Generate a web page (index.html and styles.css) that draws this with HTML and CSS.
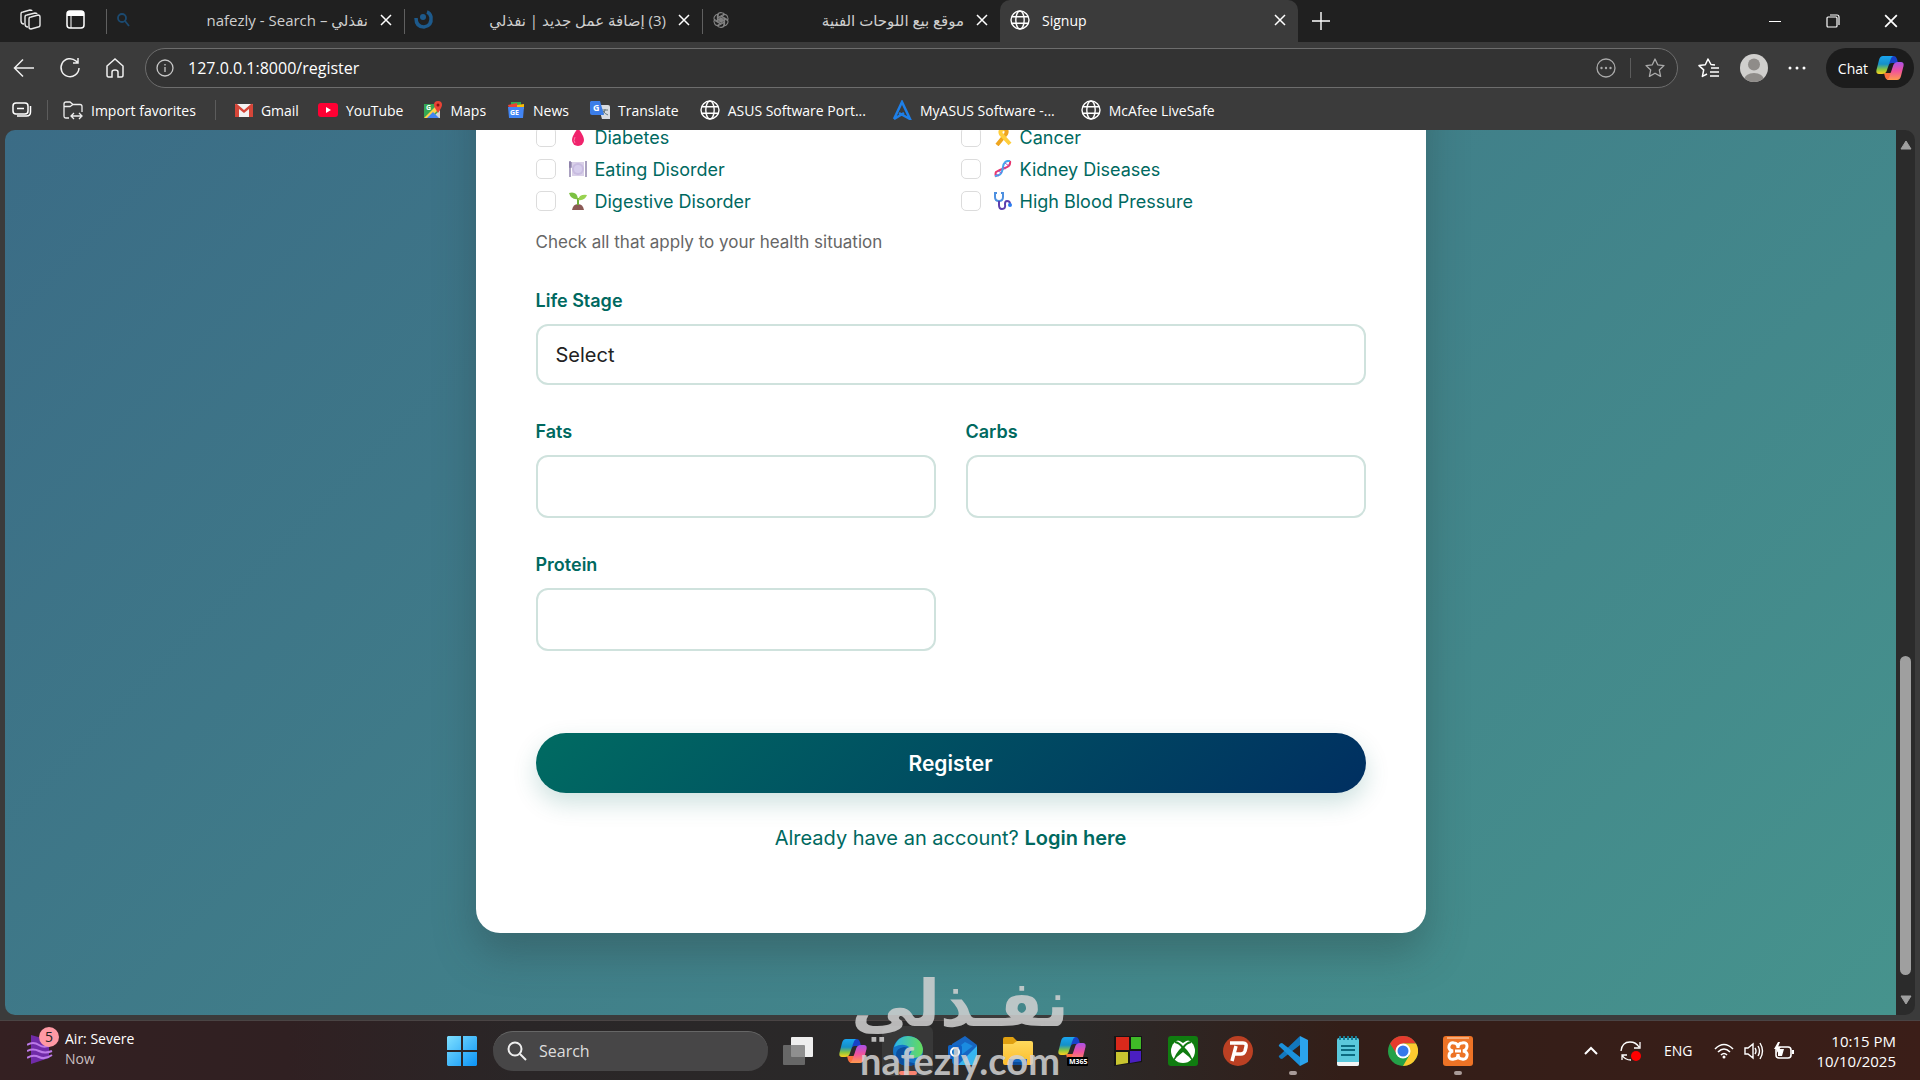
FILE: index.html
```html
<!DOCTYPE html>
<html lang="en">

<head>
    <meta charset="UTF-8">
    <title>Signup</title>
    <link rel="stylesheet" href="styles.css">
</head>

<body>
    <!-- shared icons -->
    <svg class="sprite" width="0" height="0" aria-hidden="true">
        <defs>
            <linearGradient id="copA" x1="0" y1="0" x2="0" y2="1">
                <stop offset="0" stop-color="#1aa5f0"/><stop offset=".45" stop-color="#1590c8"/><stop offset=".75" stop-color="#8cc63f"/><stop offset="1" stop-color="#ffd21e"/>
            </linearGradient>
            <linearGradient id="copB" x1="0" y1="0" x2="0" y2="1">
                <stop offset="0" stop-color="#a951e8"/><stop offset=".5" stop-color="#f0529c"/><stop offset="1" stop-color="#ff9a4d"/>
            </linearGradient>
            <linearGradient id="winG" x1="0" y1="0" x2="1" y2="1">
                <stop offset="0" stop-color="#7fe0ff"/><stop offset="1" stop-color="#0b93f6"/>
            </linearGradient>
            <linearGradient id="edgeA" x1="0" y1="0" x2="1" y2="0">
                <stop offset="0" stop-color="#2bb5e8"/><stop offset="1" stop-color="#66dc5a"/>
            </linearGradient>
            <linearGradient id="foldG" x1="0" y1="0" x2="0" y2="1">
                <stop offset="0" stop-color="#ffd95c"/><stop offset="1" stop-color="#fbbc2c"/>
            </linearGradient>
        </defs>
        <symbol id="globe" viewBox="0 0 20 20">
            <g fill="none" stroke="currentColor" stroke-width="1.4"><circle cx="10" cy="10" r="9"/><ellipse cx="10" cy="10" rx="4.2" ry="9"/><path d="M2 6.7h16M2 13.3h16"/></g>
        </symbol>
        <symbol id="close" viewBox="0 0 12 12">
            <path d="M1 1l10 10M11 1L1 11" fill="none" stroke="currentColor" stroke-width="1.5"/>
        </symbol>
        <symbol id="copilot" viewBox="0 0 28 26">
            <path d="M14 1h4q2 0 3 3l1 4h-6q-3 0-4 4z" fill="#1742c8"/>
            <path d="M8 18h6q2 0 3-4l2 8q-1 3-4 3h-3q-2 0-3-3z" fill="#f9703e"/>
            <path d="M7 1h10q-2 1-3 5l-3 9q-1 4-5 4H3q-4 0-2-6l2-8q1-4 4-4z" fill="url(#copA)"/>
            <path d="M21 25H11q2-1 3-5l3-9q1-4 5-4h3q4 0 2 6l-2 8q-1 4-4 4z" fill="url(#copB)"/>
        </symbol>
    </svg>

    <div class="browser">
        <!-- Tab strip -->
        <div class="tab-strip">
            <div class="strip-tools">
                <button class="icon-btn" aria-label="Workspaces"><svg width="22" height="22" viewBox="0 0 22 22" fill="none" stroke="#e8e8e8" stroke-width="1.4"><path d="M11 8l7-2q2 0 2 2v8q0 2-2 2l-7 2q-2 0-2-2v-8q0-2 2-2z"/><path d="M8 18q-3 0-3-3V8q0-2 2-2l8-2q2 0 2 1M4 15q-3 0-3-3V5q0-2 2-2l7-2q2 0 2 1"/></svg></button>
                <button class="icon-btn" aria-label="Tab actions"><svg width="20" height="20" viewBox="0 0 20 20"><rect x="1" y="1" width="17" height="17" rx="3" fill="none" stroke="#fff" stroke-width="1.5"/><path d="M1 3q0-2 2-2h13q2 0 2 2v3H1z" fill="#fff"/><path d="M5 6v12" stroke="#fff"/></svg></button>
            </div>
            <div class="tab">
                <svg width="14" height="14" viewBox="0 0 14 14" fill="none" stroke="#1c4a70" stroke-width="1.8"><circle cx="6" cy="5" r="4"/><path d="M9 8l4 5"/></svg>
                <span class="tab-title right" dir="ltr">nafezly - Search – نفذلي</span>
                <button class="icon-btn" aria-label="Close tab"><svg width="12" height="12"><use href="#close"/></svg></button>
            </div>
            <div class="tab">
                <svg width="20" height="20" viewBox="0 0 20 20"><path d="M2 8q0 9 8 9 8-1 7-10-1-4-4-5" fill="none" stroke="#1d5a8c" stroke-width="3.5"/><circle cx="9" cy="7" r="3" fill="#1d5a8c"/></svg>
                <span class="tab-title right" dir="rtl">(3) إضافة عمل جديد | نفذلي</span>
                <button class="icon-btn" aria-label="Close tab"><svg width="12" height="12"><use href="#close"/></svg></button>
            </div>
            <div class="tab">
                <svg width="18" height="18" viewBox="0 0 20 20" fill="none" stroke="#858585" stroke-width="1.2"><g id="petal"><path d="M6 12V5q1-4 5-3 2 0 3 2L9 7v6"/></g><use href="#petal" transform="rotate(60 10 10)"/><use href="#petal" transform="rotate(120 10 10)"/><use href="#petal" transform="rotate(180 10 10)"/><use href="#petal" transform="rotate(240 10 10)"/><use href="#petal" transform="rotate(300 10 10)"/></svg>
                <span class="tab-title right" dir="rtl">موقع بيع اللوحات الفنية</span>
                <button class="icon-btn" aria-label="Close tab"><svg width="12" height="12"><use href="#close"/></svg></button>
            </div>
            <div class="tab active">
                <svg width="20" height="20"><use href="#globe"/></svg>
                <span class="tab-title">Signup</span>
                <button class="icon-btn" aria-label="Close tab"><svg width="12" height="12"><use href="#close"/></svg></button>
            </div>
            <button class="icon-btn new-tab" aria-label="New tab"><svg width="18" height="18" viewBox="0 0 18 18" stroke="#fff" stroke-width="1.4"><path d="M9 0v18M0 9h18"/></svg></button>
            <div class="window-controls">
                <button class="icon-btn" aria-label="Minimize"><svg width="14" height="14" viewBox="0 0 14 14" stroke="#fff"><path d="M1 7.500h12"/></svg></button>
                <button class="icon-btn" aria-label="Restore"><svg width="14" height="14" viewBox="0 0 14 14" fill="none" stroke="#fff" stroke-width="1.200"><rect x="1" y="3" width="10" height="10" rx="1"/><path d="M4 1h7q2 0 2 2v8"/></svg></button>
                <button class="icon-btn" aria-label="Close"><svg width="14" height="14"><use href="#close"/></svg></button>
            </div>
        </div>

        <!-- Toolbar -->
        <div class="toolbar">
            <div class="nav-buttons">
                <button class="icon-btn" aria-label="Back"><svg width="22" height="20" viewBox="0 0 22 20" fill="none" stroke="#f0f0f0" stroke-width="1.500"><path d="M21 10H2M10 1.500L1.500 10l8.500 8.500"/></svg></button>
                <button class="icon-btn" aria-label="Refresh"><svg width="22" height="22" viewBox="0 0 22 22" fill="none" stroke="#f0f0f0" stroke-width="1.500"><path d="M20 11a9 9 0 1 1-3-7l2 2M19 1v5h-5"/></svg></button>
                <button class="icon-btn" aria-label="Home"><svg width="20" height="20" viewBox="0 0 20 20" fill="none" stroke="#f0f0f0" stroke-width="1.500"><path d="M2 8l8-7 8 7v9q0 2-1.500 2H13v-5q0-2-3-2t-3 2v5H3.500Q2 19 2 17z"/></svg></button>
            </div>
            <div class="address-bar">
                <svg width="18" height="18" viewBox="0 0 18 18" fill="none" stroke="#c8c8c8" stroke-width="1.300"><circle cx="9" cy="9" r="8"/><path d="M9 8v5M9 5v1.500"/></svg>
                <input class="url" type="text" aria-label="Address" value="127.0.0.1:8000/register">
                <button class="icon-btn" aria-label="Page options"><svg width="20" height="20" viewBox="0 0 20 20" fill="#aaa"><circle cx="10" cy="10" r="9" fill="none" stroke="#aaa" stroke-width="1.300"/><circle cx="5.500" cy="10" r="1.200"/><circle cx="10" cy="10" r="1.200"/><circle cx="14.500" cy="10" r="1.200"/></svg></button>
                <span class="divider"></span>
                <button class="icon-btn" aria-label="Add to favorites"><svg width="20" height="20" viewBox="0 0 20 20" fill="none" stroke="#aaa" stroke-width="1.300" stroke-linejoin="round"><path d="M10 1l2.700 5.800 6.300.8-4.700 4.300 1.300 6.500-5.600-3.200-5.600 3.200 1.300-6.500L1 7.600l6.300-.8z"/></svg></button>
            </div>
            <div class="toolbar-end">
                <button class="icon-btn" aria-label="Favorites"><svg width="22" height="20" viewBox="0 0 22 20" fill="none" stroke="#fff" stroke-width="1.500" stroke-linejoin="round"><path d="M17 7l-4-.5L10 1 7.300 6.800 1 7.600l4.700 4.300-1.300 6.500L9 16M13 10h8M12 14h9M12 18h9"/></svg></button>
                <button class="icon-btn" aria-label="Profile"><svg width="28" height="28" viewBox="0 0 28 28"><clipPath id="av"><circle cx="14" cy="14" r="14"/></clipPath><g clip-path="url(#av)"><path d="M0 0h28v28H0z" fill="#d0cfcd"/><circle cx="14" cy="10.500" r="6" fill="#8f8c89"/><ellipse cx="14" cy="26" rx="10" ry="7" fill="#8f8c89"/></g></svg></button>
                <button class="icon-btn" aria-label="Settings"><svg width="18" height="6" viewBox="0 0 18 6" fill="#fff"><circle cx="2" cy="3" r="1.500"/><circle cx="9" cy="3" r="1.500"/><circle cx="16" cy="3" r="1.500"/></svg></button>
                <button class="chat-btn">Chat <svg width="28" height="26"><use href="#copilot"/></svg></button>
            </div>
        </div>

        <!-- Favorites bar -->
        <nav class="favorites">
            <button class="icon-btn" aria-label="Saved"><svg width="20" height="16" viewBox="0 0 20 16" fill="none" stroke="#fff" stroke-width="1.500"><rect x="1" y="1" width="15" height="11" rx="3"/><path d="M5 6.500h7M18.500 4v6q0 4-4 4H5"/></svg></button>
            <span class="divider"></span>
            <a href="#" class="fav wide"><svg width="20" height="20" viewBox="0 0 20 20" fill="none" stroke="#eee" stroke-width="1.300"><path d="M6 18H3q-2 0-2-2V4q0-2 2-2h4l3 2.500h7q2 0 2 2V12M1 6.500h6l3-2M8 16h10M11 13l-3 3 3 3M16 13l3 3-3 3"/></svg>Import favorites</a>
            <span class="divider"></span>
            <a href="#" class="fav first"><svg width="18" height="14" viewBox="0 0 18 14"><path d="M0 1h18v13H0z" fill="#f2f2f2"/><path d="M0 2q0-2 2-1l7 6 7-6q2-1 2 1v12h-4V6l-5 4-5-4v8H0z" fill="#d54639"/></svg>Gmail</a>
            <a href="#" class="fav"><svg width="20" height="14" viewBox="0 0 20 14"><rect width="20" height="14" rx="3" fill="#f03"/><path d="M8 4l5 3-5 3z" fill="#fff"/></svg>YouTube</a>
            <a href="#" class="fav"><svg width="18" height="18" viewBox="0 0 18 18"><path d="M0 3h16v14H0z" fill="#35a853"/><path d="M16 9v8H8z" fill="#d5d5d5"/><path d="M0 17L13 4l3 3L6 17z" fill="#ffd04b"/><path d="M3 17l6-6 6 6z" fill="#4285f4"/><text x="2" y="9" class="tiny-g">G</text><path d="M14 0a4 4 0 0 1 4 4q0 2-4 8-4-6-4-8a4 4 0 0 1 4-4z" fill="#ea4335"/><circle cx="14" cy="4" r="1.500" fill="#811"/></svg>Maps</a>
            <a href="#" class="fav"><svg width="18" height="16" viewBox="0 0 18 16"><path d="M4 0h10v6H4z" fill="#34a853"/><path d="M1 3l9-2 1 5H2z" fill="#ea4335"/><path d="M10 3l7-1v5h-7z" fill="#fbbc04"/><path d="M1 5h16l-1 11H2z" fill="#4285f4"/><text x="3" y="13" class="tiny-g">GE</text></svg>News</a>
            <a href="#" class="fav"><svg width="20" height="18" viewBox="0 0 20 18"><path d="M8 4h10q2 0 2 2v12h-8z" fill="#d8dbe0"/><path d="M12 9h6M15 8v1q-1 4-3 5M13 10q2 3 5 4" stroke="#677" fill="none"/><path d="M1 0h9l4 14H2q-2 0-2-2V1z" fill="#3b7de8"/><text x="3" y="10" class="tiny-g big">G</text></svg>Translate</a>
            <a href="#" class="fav long"><svg width="20" height="20"><use href="#globe"/></svg>ASUS Software Port...</a>
            <a href="#" class="fav long"><svg width="20" height="20" viewBox="0 0 20 20" fill="none" stroke="#1e7fe8" stroke-width="2.500"><path d="M2 19L10 2l8 17-11-6M2 19l10-6"/></svg>MyASUS Software -...</a>
            <a href="#" class="fav"><svg width="20" height="20"><use href="#globe"/></svg>McAfee LiveSafe</a>
        </nav>

        <!-- Page -->
        <div class="view">
            <main class="page">
                <form class="card">
                    <div class="conditions">
                        <label class="check"><input type="checkbox"><svg width="18" height="18" viewBox="0 0 18 18"><path d="M9 0q6 8 6 12a6 6 0 0 1-12 0q0-4 6-12z" fill="#f0236c"/><path d="M6 9q-2 4 0 6" stroke="#ff79a8" fill="none"/></svg>Diabetes</label>
                        <label class="check"><input type="checkbox"><svg width="18" height="18" viewBox="0 0 18 18" fill="none" stroke-width="4"><path d="M3 17L12 6q2-4-2-5" stroke="#eea51f"/><path d="M16 16L7 6q-2-4 3-5" stroke="#ffce3c"/></svg>Cancer</label>
                        <label class="check"><input type="checkbox"><svg width="18" height="18" viewBox="0 0 18 18"><path d="M3 2h12v14H3z" fill="#d9d0e8"/><circle cx="9" cy="9" r="6" fill="#c8bce0"/><circle cx="9" cy="9" r="4" fill="#d6cdec"/><path d="M1 1v16M17 1v16M0 2v5h2V2" stroke="#8e82ab" stroke-width="1.500" fill="none"/></svg>Eating Disorder</label>
                        <label class="check"><input type="checkbox"><svg width="18" height="18" viewBox="0 0 18 18" fill="none" stroke-width="2"><path d="M16 1q1 5-5 7t-9 4q-1 2 0 5" stroke="#e8376f"/><path d="M16 1q-6-1-7 6t-4 8q-2 1-4 1" stroke="#48a7ef"/><path d="M11 3l4 3M9 7l3 2M4 11l4 2M2 14l3 2" stroke="#9b59c9" stroke-width="1"/></svg>Kidney Diseases</label>
                        <label class="check"><input type="checkbox"><svg width="18" height="18" viewBox="0 0 18 18"><path d="M3 18q1-6 6-6t6 6z" fill="#8b5a55"/><path d="M9 13V6" stroke="#6fae37" stroke-width="2"/><path d="M9 7Q2 8 0 1q8-2 9 6z" fill="#7cc142"/><path d="M9 8q1-6 9-5-2 6-9 5z" fill="#98d250"/></svg>Digestive Disorder</label>
                        <label class="check"><input type="checkbox"><svg width="18" height="18" viewBox="0 0 18 18" fill="none" stroke-width="2"><path d="M3 1H1v4q0 4 4 4t4-4V1H7" stroke="#4c8fe0"/><path d="M5 9v4q0 4 3 4 4 0 3-5 0-3 2-3 3 0 3 3" stroke="#5b3fae"/><circle cx="16" cy="13" r="2" fill="#2b7cf0"/></svg>High Blood Pressure</label>
                    </div>
                    <p class="hint">Check all that apply to your health situation</p>

                    <div class="fields">
                        <div class="field full">
                            <label for="stage">Life Stage</label>
                            <select id="stage" name="stage">
                                <option>Select</option>
                            </select>
                        </div>
                        <div class="field">
                            <label for="fats">Fats</label>
                            <input type="text" id="fats" name="fats">
                        </div>
                        <div class="field">
                            <label for="carbs">Carbs</label>
                            <input type="text" id="carbs" name="carbs">
                        </div>
                        <div class="field">
                            <label for="protein">Protein</label>
                            <input type="text" id="protein" name="protein">
                        </div>
                    </div>

                    <button type="button" class="register">Register</button>
                    <p class="login">Already have an account? <a href="#">Login here</a></p>
                </form>
            </main>
            <div class="scrollbar">
                <svg width="12" height="10" viewBox="0 0 12 10"><path d="M6 1l5 8H1z" fill="#9f9f9f" stroke="#9f9f9f" stroke-linejoin="round"/></svg>
                <div class="track"><div class="thumb"></div></div>
                <svg width="12" height="10" viewBox="0 0 12 10"><path d="M6 9l5-8H1z" fill="#9f9f9f" stroke="#9f9f9f" stroke-linejoin="round"/></svg>
            </div>
        </div>
    </div>

    <!-- Taskbar -->
    <footer class="taskbar">
        <button class="weather">
            <span class="weather-icon">
                <svg width="26" height="30" viewBox="0 0 26 30"><path d="M4 1l18 5v18L4 30z" fill="#702ba8"/><path d="M0 11q6-4 12 0t13-1M0 17q6-3 12 0t13 0M0 24q6-4 12-1t13-2" fill="none" stroke="#bb79e8" stroke-width="2"/></svg>
                <span class="badge">5</span>
            </span>
            <span class="weather-text">Air: Severe<br><span class="muted">Now</span></span>
        </button>

        <div class="apps">
            <button class="app" aria-label="Start"><svg width="30" height="30" viewBox="0 0 30 30"><path d="M1 0h13v14H0V1zM16 0h13l1 1v13H16zM0 16h14v14H1l-1-1zM16 16h14v13l-1 1H16z" fill="url(#winG)"/></svg></button>
            <label class="search">
                <svg width="20" height="20" viewBox="0 0 20 20" fill="none" stroke="#eee" stroke-width="2"><circle cx="8" cy="8" r="6.500"/><path d="M13 13l6 6"/></svg>
                <input type="text" placeholder="Search" aria-label="Search">
            </label>
            <button class="app" aria-label="Task view"><svg width="30" height="28" viewBox="0 0 30 28"><rect x="8" width="22" height="20" rx="1" fill="#eee"/><rect y="8" width="22" height="20" rx="1" fill="#777" opacity=".8"/></svg></button>
            <button class="app" aria-label="Copilot"><svg width="28" height="26"><use href="#copilot"/></svg></button>
            <button class="app current" aria-label="Edge"><svg width="30" height="30" viewBox="0 0 30 30"><circle cx="15" cy="15" r="15" fill="#1473c8"/><path d="M1 11Q5 0 15 0q13 1 15 13 0 8-8 9-6 0-5-4 3-3 0-6-6-6-16-1z" fill="url(#edgeA)"/><path d="M11 16q-1 9 9 11 4 1 7-2-5 5-12 5-12-1-12-11 0-7 8-8 4 0 5 3-4-1-5 2z" fill="#0c4f9e"/></svg></button>
            <button class="app" aria-label="Outlook"><svg width="30" height="30" viewBox="0 0 30 30"><path d="M4 8L17 0l12 9v17q0 3-3 3H8q-4 0-4-4z" fill="#1766c2"/><path d="M5 15l12-9 8 4-17 13z" fill="#1b8be0"/><path d="M29 10v16q0 3-3 3H10z" fill="#37b5f0"/><rect y="9" width="14" height="14" rx="2" fill="#0f62c4"/><circle cx="7" cy="16" r="4" fill="none" stroke="#fff" stroke-width="2"/></svg></button>
            <button class="app" aria-label="File Explorer"><svg width="30" height="28" viewBox="0 0 30 28"><path d="M0 2q0-2 2-2h8l4 4h10v10H0z" fill="#e0a010"/><path d="M0 7h10l4-3h14q2 0 2 2v20q0 2-2 2H2q-2 0-2-2z" fill="url(#foldG)"/><path d="M6 22h18v6H6z" fill="#1769c4"/><path d="M10 25h10v3H10z" fill="#0e4d9a"/></svg></button>
            <button class="app" aria-label="Microsoft 365"><svg width="30" height="30" viewBox="0 0 30 30"><use href="#copilot" width="28" height="26"/><rect x="9" y="21" width="21" height="9" rx="1" fill="#000"/><text x="11" y="28" class="m365">M365</text></svg></button>
            <button class="app" aria-label="Four panes"><svg width="28" height="30" viewBox="0 0 28 30"><path d="M0 0h28v26L0 30z" fill="#151515"/><path d="M2 1h13v13H2z" fill="#d9291b"/><path d="M17 1h10v12H17z" fill="#3fb927"/><path d="M2 16h12v11L2 29z" fill="#c9c530"/><path d="M16 15h11v10l-11 2z" fill="#4a1fc0"/></svg></button>
            <button class="app" aria-label="Xbox"><svg width="30" height="30" viewBox="0 0 30 30"><rect width="30" height="30" rx="3" fill="#107c10"/><circle cx="15" cy="15" r="12" fill="#fff"/><path d="M6 5q4-2 9 2 5-4 9-2-4-4-9-4T6 5zM5 26q2-9 10-16 8 7 10 16-4-6-10-10Q9 20 5 26z" fill="#107c10"/><path d="M7 6q5 1 8 6 3-5 8-6" fill="none" stroke="#107c10" stroke-width="2"/></svg></button>
            <button class="app" aria-label="P app"><svg width="30" height="30" viewBox="0 0 30 30"><circle cx="15" cy="15" r="15" fill="#bb4023"/><path d="M9 25l4-15M7 7h13q4 0 3 4l-1 4q-1 3-4 3h-7" fill="none" stroke="#fff" stroke-width="3.500"/></svg></button>
            <button class="app running" aria-label="VS Code"><svg width="30" height="30" viewBox="0 0 30 30"><path d="M22 0l8 4v22l-8 4z" fill="#2ba3ec"/><path d="M22 0v9L4 23q-2 0-3-2-1-1 1-2z" fill="#1377bd"/><path d="M22 30v-9L4 7Q2 7 1 9q-1 1 1 2z" fill="#1b91dc"/></svg></button>
            <button class="app" aria-label="Notepad"><svg width="24" height="30" viewBox="0 0 24 30"><rect x="1" y="2" width="22" height="28" rx="2" fill="#5ac8dc"/><path d="M1 26h22v2q0 2-2 2H3q-2 0-2-2z" fill="#f4f4f4"/><path d="M5 10h14M5 14h14M5 19h14" stroke="#0b6a80" stroke-width="2"/><path d="M4 0v4M8 0v4M12 0v4M16 0v4M20 0v4" stroke="#167d95" stroke-width="2"/></svg></button>
            <button class="app" aria-label="Chrome"><svg width="30" height="30" viewBox="0 0 30 30"><circle cx="15" cy="15" r="15" fill="#24a148"/><path d="M2 7.500A15 15 0 0 1 28 7.500H15L9 18.500z" fill="#e53b2e"/><path d="M28 7.500A15 15 0 0 1 15 30l6.500-11L15 7.500z" fill="#fdca2f"/><circle cx="15" cy="15" r="7.500" fill="#fff"/><circle cx="15" cy="15" r="5.500" fill="#3678ea"/></svg></button>
            <button class="app running" aria-label="XAMPP"><svg width="30" height="30" viewBox="0 0 30 30"><rect width="30" height="30" rx="3" fill="#ed7326"/><path d="M4 2h22" stroke="#f6ac79" stroke-width="2"/><path d="M10 15q-5-1-4-5t5-3q4 0 4 5 0-5 4-5 5-1 5 3t-4 5q5 1 4 5t-5 3q-4 0-4-5 0 5-4 5-5 1-5-3t4-5zM12 15h6" fill="none" stroke="#fff" stroke-width="3"/></svg></button>
        </div>

        <div class="tray">
            <button class="icon-btn" aria-label="Show hidden icons"><svg width="14" height="10" viewBox="0 0 14 10" fill="none" stroke="#fff" stroke-width="2"><path d="M1 8l6-6 6 6"/></svg></button>
            <button class="icon-btn" aria-label="Update"><svg width="22" height="22" viewBox="0 0 22 22" fill="none" stroke="#fff" stroke-width="1.300"><path d="M1 11q1-9 9-9 6 0 9 5M20 2v6h-6M2 20v-5h5M2 15q3 5 9 5"/><circle cx="16" cy="16" r="5" fill="#f00" stroke="none"/></svg></button>
            <span class="lang">ENG</span>
            <div class="status">
                <svg width="20" height="16" viewBox="0 0 20 16" fill="none" stroke="#fff" stroke-width="1.600"><path d="M1 6q9-9 18 0M4 9q6-6 12 0M7 12q3-3 6 0"/><circle cx="10" cy="14" r="1.500" fill="#fff" stroke="none"/></svg>
                <svg width="20" height="18" viewBox="0 0 20 18" fill="none" stroke="#fff" stroke-width="1.400"><path d="M1 6h3l5-4v14l-5-4H1zM11 6q2 3 0 6M14 4q3 5 0 10M16 1q5 8 0 16"/></svg>
                <svg width="20" height="18" viewBox="0 0 20 18"><rect x="2" y="5" width="15" height="11" rx="3" fill="none" stroke="#fff" stroke-width="1.600"/><path d="M4 7h6l-2 7H4zM18 8h2v4h-2z" fill="#fff"/><path d="M4 0L0 7h3l-1 5 5-7H4l2-5z" fill="#fff"/></svg>
            </div>
            <div class="clock">10:15 PM<br>10/10/2025</div>
        </div>
    </footer>

    <!-- Watermark -->
    <div class="watermark">
        <span class="wm-ar" lang="ar" dir="rtl">نفـذلي</span>
        <span class="wm-en">nafezly.com</span>
    </div>
</body>

</html>
```
FILE: styles.css
```css
* {
    margin: 0px;
    padding: 0px;
    box-sizing: border-box;
}

body {
    position: relative;
    display: flex;
    flex-direction: column;
    height: 100vh;
    overflow: hidden;
    background-color: #3b3b3b;
    color: white;
    font-family: "Open Sans", "Noto Sans", "DejaVu Sans", sans-serif;
    font-size: 14px;
}

button {
    border: none;
    background: none;
    color: inherit;
    font-family: inherit;
    font-size: inherit;
}

input {
    border: none;
    outline: none;
    background: none;
    color: inherit;
    font-family: inherit;
    min-width: 0;
}

a {
    color: inherit;
    text-decoration: none;
}

svg {
    display: block;
    flex-shrink: 0;
}

.sprite {
    position: absolute;
}

.icon-btn {
    display: flex;
    align-items: center;
    justify-content: center;
    flex-shrink: 0;
}

.divider {
    width: 1px;
    height: 20px;
    background-color: #5c5c5c;
}

/* browser */
.browser {
    display: flex;
    flex-direction: column;
    flex: 1;
    min-height: 0;
}

.tab-strip {
    display: flex;
    background-color: #202020;
    height: 42px;
}

.strip-tools {
    display: flex;
    align-items: center;
    gap: 24px;
    width: 106px;
    padding: 0 0 2px 20px;
}

.tab {
    display: flex;
    align-items: center;
    gap: 12px;
    width: 298px;
    padding: 0 12px 2px 10px;
    background: linear-gradient(#606060, #606060) left 9px / 1px 25px no-repeat;
}

.tab.active {
    background: #3b3b3b;
    border-radius: 10px 10px 0 0;
    color: white;
}

.tab-title {
    flex: 1;
    color: #cfcfcf;
    white-space: nowrap;
    overflow: hidden;
}

.tab.active .tab-title {
    color: white;
}

.tab-title.right {
    font-size: 15px;
    text-align: right;
}

.tab-title[dir="rtl"] {
    text-align: start;
}

.new-tab {
    width: 46px;
}

.window-controls {
    display: flex;
    gap: 44px;
    margin-left: auto;
    padding-right: 22px;
}

.toolbar {
    display: flex;
    align-items: center;
    height: 52px;
    padding-right: 6px;
}

.nav-buttons {
    display: flex;
    gap: 24px;
    width: 145px;
    padding-left: 13px;
}

.address-bar {
    display: flex;
    align-items: center;
    gap: 14px;
    flex: 1;
    height: 40px;
    padding: 0 12px 0 10px;
    background-color: #333;
    border: 1px solid #6d6d6d;
    border-radius: 20px;
}

.address-bar .url {
    flex: 1;
    font-size: 16px;
}

.toolbar-end {
    display: flex;
    align-items: center;
    gap: 20px;
    padding-left: 20px;
}

.chat-btn {
    display: flex;
    align-items: center;
    gap: 8px;
    height: 40px;
    padding: 0 10px 0 12px;
    background-color: #1c1c1c;
    border-radius: 20px;
}

.favorites {
    display: flex;
    align-items: center;
    gap: 15px;
    height: 36px;
    padding: 0 12px 4px;
}

.fav {
    display: flex;
    align-items: center;
    gap: 8px;
    margin-right: 6px;
    white-space: nowrap;
}

.fav.long {
    margin-right: 11px;
}

.fav.wide,
.fav.first {
    margin-right: 4px;
}

.fav.first {
    margin-left: 4px;
}

.tiny-g {
    fill: white;
    font-size: 7px;
    font-weight: 700;
}

.tiny-g.big {
    font-size: 9px;
}

.view {
    display: flex;
    flex: 1;
    min-height: 0;
    margin: 0 5px;
    border-radius: 10px;
    overflow: hidden;
}

.page {
    display: flex;
    flex-direction: column;
    align-items: center;
    justify-content: flex-end;
    flex: 1;
    padding: 0 20px 82px;
    background: linear-gradient(135deg, #3b6c86, #46938d);
    font-family: Inter, "Liberation Sans", sans-serif;
    color: #00695f;
}

.scrollbar {
    display: flex;
    flex-direction: column;
    align-items: center;
    gap: 8px;
    width: 19px;
    padding: 10px 0;
    background-color: #2b2b2b;
}

.track {
    display: flex;
    flex-direction: column;
    justify-content: flex-end;
    flex: 1;
    padding-bottom: 12px;
}

.thumb {
    width: 11px;
    height: 39%;
    background-color: #9f9f9f;
    border-radius: 6px;
}

/* sign up form */
.card {
    width: 100%;
    max-width: 950px;
    padding: 60px;
    padding-bottom: 80px;
    background-color: white;
    border-radius: 24px;
    box-shadow: 0 20px 40px rgba(40, 60, 60, 0.35);
}

.conditions {
    display: grid;
    grid-template-columns: 1fr 1fr;
    column-gap: 20px;
    row-gap: 8px;
}

.check {
    display: flex;
    align-items: center;
    height: 24px;
    font-size: 18px;
}

.check input {
    appearance: none;
    width: 20px;
    height: 20px;
    margin-right: 13px;
    border: 1px solid #dcdcdc;
    border-radius: 5px;
}

.check svg {
    margin-right: 8px;
}

.hint {
    margin-top: 17px;
    font-size: 17px;
    line-height: 24px;
    color: #666;
}

.fields {
    display: grid;
    grid-template-columns: 1fr 1fr;
    gap: 34px 30px;
    margin-top: 34px;
}

.field {
    display: flex;
    flex-direction: column;
    gap: 10px;
}

.field.full {
    grid-column: 1 / 3;
}

.field label {
    font-size: 18px;
    font-weight: 600;
    line-height: 26px;
}

.field input,
.field select {
    appearance: none;
    width: 100%;
    height: 63px;
    padding: 0 18px;
    border: 2px solid #cfe2dd;
    border-radius: 12px;
    background-color: white;
    color: #222;
    font-family: inherit;
    font-size: 20px;
}

.field select {
    height: 61px;
}

.register {
    width: 100%;
    height: 60px;
    margin-top: 82px;
    border-radius: 30px;
    background: linear-gradient(135deg, #006b62, #002f61);
    box-shadow: 0 10px 25px rgba(0, 105, 95, 0.2);
    color: white;
    font-size: 21px;
    font-weight: 600;
}

.login {
    margin-top: 30px;
    text-align: center;
    font-size: 20px;
    line-height: 30px;
}

.login a {
    font-weight: 600;
}

/* taskbar */
.taskbar {
    display: flex;
    align-items: center;
    position: relative;
    height: 60px;
    margin-top: 5px;
    border-top: 1px solid #4a4444;
    background: linear-gradient(90deg, #342022, #302022 15%, #2a2627 27%, #2a2a2a 55%, #331e18 70%, #3b1e18);
}

.weather {
    display: flex;
    align-items: center;
    gap: 12px;
    flex: 1;
    padding: 0 0 4px 27px;
    text-align: left;
    line-height: 20px;
}

.weather-icon {
    position: relative;
}

.badge {
    position: absolute;
    top: -7px;
    right: -6px;
    width: 20px;
    height: 20px;
    background-color: #ff99a4;
    border-radius: 10px;
    color: #222;
    text-align: center;
}

.muted {
    color: #c9bfc0;
}

.apps {
    display: flex;
    align-items: center;
    padding-right: 4px;
}

.app {
    position: relative;
    display: flex;
    align-items: center;
    justify-content: center;
    width: 51px;
    height: 50px;
    margin: 0 2px;
    border-radius: 6px;
}

.app.current {
    background-color: #383838;
}

.app.running::after,
.app.current::after {
    content: "";
    position: absolute;
    bottom: 1px;
    width: 8px;
    height: 4px;
    background-color: #a99b98;
    border-radius: 2px;
}

.app.current::after {
    width: 18px;
    background-color: #f98370;
}

.search {
    display: flex;
    align-items: center;
    gap: 12px;
    width: 275px;
    height: 40px;
    margin: 0 2px 0 4px;
    padding: 0 14px;
    background-color: #474647;
    border-top: 1px solid #666;
    border-radius: 20px;
}

.search input {
    flex: 1;
    font-size: 16px;
}

.search input::placeholder {
    color: #ddd;
}

.tray {
    display: flex;
    align-items: center;
    justify-content: flex-end;
    flex: 1;
    gap: 22px;
    padding-right: 24px;
}

.status {
    display: flex;
    align-items: center;
    gap: 10px;
}

.clock {
    font-size: 15px;
    text-align: right;
    line-height: 20px;
}

.m365 {
    fill: white;
    font-size: 7px;
    font-weight: 700;
}

/* watermark over the page and the taskbar */
.watermark {
    position: absolute;
    left: 50%;
    bottom: 0;
    transform: translateX(-50%);
    display: flex;
    flex-direction: column;
    align-items: center;
    color: #d2d2d2;
    opacity: 0.85;
    pointer-events: none;
}

.wm-ar {
    font-family: "DejaVu Sans", sans-serif;
    font-size: 64px;
    font-weight: 700;
    line-height: 72px;
}

.wm-en {
    font-family: Lato, sans-serif;
    font-size: 38px;
    font-weight: 700;
    line-height: 40px;
}
```
